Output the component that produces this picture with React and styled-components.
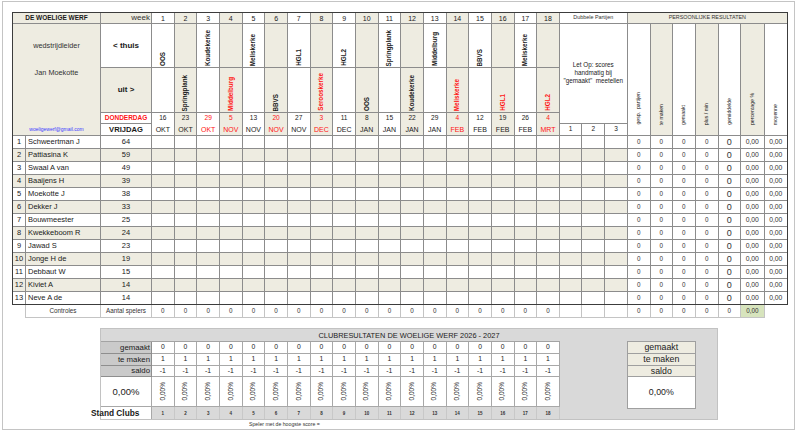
import React from 'react'
import styled, { createGlobalStyle } from 'styled-components'

const BEIGE = '#eeece1'
const WHITE = '#ffffff'
const RED = '#ff1414'
const INK = '#1a1a1a'

const weeks = [
  { home: 'OOS', day: '16', month: 'OKT' },
  { away: 'Springplank', day: '23', month: 'OKT' },
  { home: 'Koudekerke', day: '29', month: 'OKT', red: true },
  { away: 'Middelburg', awayRed: true, day: '5', month: 'NOV', red: true },
  { home: 'Meliskerke', day: '13', month: 'NOV' },
  { away: 'BBVS', day: '20', month: 'NOV', red: true },
  { home: 'HGL1', day: '27', month: 'NOV' },
  { away: 'Serooskerke', awayRed: true, day: '3', month: 'DEC', red: true },
  { home: 'HGL2', day: '11', month: 'DEC' },
  { away: 'OOS', day: '8', month: 'JAN' },
  { home: 'Springplank', day: '15', month: 'JAN' },
  { away: 'Koudekerke', day: '22', month: 'JAN' },
  { home: 'Middelburg', day: '29', month: 'JAN' },
  { away: 'Meliskerke', awayRed: true, day: '4', month: 'FEB', red: true },
  { home: 'BBVS', day: '12', month: 'FEB' },
  { away: 'HGL1', awayRed: true, day: '19', month: 'FEB' },
  { home: 'Meliskerke', day: '26', month: 'FEB' },
  { away: 'HGL2', awayRed: true, day: '4', month: 'MRT', red: true },
]

const players = [
  ['Schweertman J', 64],
  ['Pattiasina K', 59],
  ['Swaal A van', 49],
  ['Baaijens H', 39],
  ['Moekotte J', 38],
  ['Dekker J', 33],
  ['Bouwmeester', 25],
  ['Kwekkeboom R', 24],
  ['Jawad S', 23],
  ['Jonge H de', 19],
  ['Debbaut W', 15],
  ['Kiviet A', 14],
  ['Neve A de', 14],
]

const resultLabels = ['gesp.  partijen', 'te maken', 'gemaakt', 'plus / min', 'gemiddelde', 'percentage %', 'moyenne']

const shade = (i) => (i % 2 ? BEIGE : WHITE)

const GlobalStyle = createGlobalStyle`
  * { box-sizing: border-box; }
  body {
    margin: 0;
    background: #fff;
    color: ${INK};
    font-family: "Liberation Sans", Arial, sans-serif;
  }
`

const Frame = styled.div`
  margin: 1px 0 0 2px;
  width: 793px;
  height: 429px;
  border: 1px solid #c4c4c4;
  padding: 10px 0 0 9px;
`

const COLS = '12px 74px 50px repeat(21, 21.667px) 22px 21px 22px 22px 21px 23px 22px'

const Sheet = styled.div`
  display: grid;
  grid-template-columns: ${COLS};
  grid-template-rows: 10px 43px 44px 10px 11px repeat(13, 12px);
  gap: 1px;
  width: max-content;
  background: #8c8c8c;
  border: 1px solid #3c3c3c;
`

const Cell = styled.div`
  grid-column: span ${(p) => p.$cs || 1};
  grid-row: span ${(p) => p.$rs || 1};
  background: ${(p) => p.$bg || WHITE};
  color: ${(p) => p.$color || INK};
  font-size: ${(p) => p.$size || 7}px;
  display: flex;
  align-items: center;
  justify-content: center;
  line-height: 1;
  white-space: nowrap;
  overflow: hidden;
`

const ClubName = styled(Cell)`
  background: ${BEIGE};
  font-weight: 700;
  font-size: 6.5px;
`

const WeekLabel = styled(Cell)`
  background: ${BEIGE};
  justify-content: flex-end;
  padding-right: 1px;
  font-size: 8px;
  color: #333;
`

const SmallHead = styled(Cell)`
  font-size: 5.4px;
  color: #333;
`

const Leader = styled(Cell)`
  background: ${BEIGE};
  flex-direction: column;
  justify-content: flex-start;
  padding: 18px 0 3px;
  gap: 20px;
  font-size: 7.3px;
  color: #333;
`

const Mail = styled.span`
  margin-top: auto;
  font-size: 5px;
  color: #3b3bff;
`

const Side = styled(Cell)`
  font-weight: 700;
  font-size: 8px;
`

const DayName = styled(Cell)`
  font-weight: 700;
`

const TeamCell = styled(Cell)`
  align-items: flex-end;
  padding-bottom: 1px;
  font-weight: 700;
  font-size: 6.3px;
`

const Upright = styled.span`
  writing-mode: vertical-rl;
  transform: rotate(180deg);
  white-space: pre;
  line-height: 1;
`

const DateCell = styled(Cell)`
  flex-direction: column;
  justify-content: space-between;
  padding: 2px 0 2px;
  font-size: 6.6px;
`

const Month = styled.span`
  font-size: 7px;
`

const Note = styled(Cell)`
  flex-direction: column;
  gap: 1.8px;
  font-size: 6.3px;
  color: #222;
`

const ResultHead = styled(Cell)`
  align-items: flex-end;
  padding-bottom: 10px;
  font-size: 5.2px;
  color: #222;
`

const RowNo = styled(Cell)`
  font-size: 7.5px;
`

const PlayerName = styled(Cell)`
  justify-content: flex-start;
  padding-left: 2px;
  font-size: 7.5px;
`

const Score = styled(Cell)`
  font-size: 7.5px;
`

const Result = styled(Cell)`
  font-size: ${(p) => p.$size || 6.3}px;
  color: #333;
`

const Checks = styled.div`
  display: grid;
  grid-template-columns: 74px 50px repeat(21, 21.667px) 22px 21px 22px 22px 21px 23px;
  grid-template-rows: 12px;
  gap: 1px;
  width: max-content;
  margin-left: 13px;
  background: #c4c4c4;
  border: 1px solid #c4c4c4;
  border-top: none;
`

const CheckCell = styled(Cell)`
  font-size: 6.3px;
  color: #333;
`

const ClubBox = styled.div`
  margin: 10px 0 0 88px;
  width: 618px;
  height: 92px;
  background: #d9d9d9;
  border: 1px solid #c2c2c2;
  display: flex;
  flex-direction: column;
`

const ClubTitle = styled.div`
  height: 12px;
  display: flex;
  align-items: center;
  justify-content: center;
  font-size: 7.4px;
  color: #222;
`

const ClubBody = styled.div`
  display: flex;
  align-items: flex-start;
  flex: 1;
`

const ClubGrid = styled.div`
  display: grid;
  grid-template-columns: 51px repeat(18, 22.667px);
  grid-template-rows: 12px 12px 11px 30px 12px;
  border-top: 1px solid #a3a3a3;
`

const ClubLabel = styled.div`
  display: flex;
  align-items: center;
  justify-content: flex-end;
  padding-right: 1px;
  background: #cacaca;
  border-right: 1px solid #8e8e8e;
  border-bottom: 1px solid #8e8e8e;
  font-size: 7.8px;
  line-height: 1;
`

const ClubValue = styled.div`
  display: flex;
  align-items: center;
  justify-content: center;
  background: #fff;
  border-right: 1px solid #a8a8a8;
  border-bottom: 1px solid #a8a8a8;
  font-size: ${(p) => p.$size || 6.8}px;
  line-height: 1;
  color: #222;
`

const StandLabel = styled.div`
  display: flex;
  align-items: center;
  background: #fff;
  border-right: 1px solid #a8a8a8;
  font-size: 8.3px;
  font-weight: 700;
  line-height: 1;
  white-space: nowrap;
  overflow: visible;

  span {
    margin-left: -10px;
  }
`

const StandNo = styled.div`
  display: flex;
  align-items: center;
  justify-content: center;
  border-right: 1px solid #c8c8c8;
  font-size: 4.5px;
  font-weight: 700;
  color: #333;
`

const Spacer = styled.div`
  width: 67px;
`

const Totals = styled.div`
  width: 69px;
  display: flex;
  flex-direction: column;
  border: 1px solid #9f9f9f;
  border-bottom: none;
`

const TotalCell = styled.div`
  height: ${(p) => p.$h}px;
  display: flex;
  align-items: center;
  justify-content: center;
  background: ${(p) => p.$bg || WHITE};
  border-bottom: 1px solid #9f9f9f;
  font-size: 8.8px;
  line-height: 1;
  color: #222;
`

const Footnote = styled.div`
  margin-left: 237px;
  height: 9px;
  line-height: 9px;
  font-size: 5.2px;
  color: #333;
`

export default function App() {
  return (
    <>
      <GlobalStyle />
      <Frame>
        <Sheet>
          <ClubName $cs={2}>DE WOELIGE WERF</ClubName>
          <WeekLabel>week</WeekLabel>
          {weeks.map((w, i) => (
            <Cell key={'n' + i} $bg={shade(i)}>{i + 1}</Cell>
          ))}
          <SmallHead $cs={3}>Dubbele Partijen</SmallHead>
          <SmallHead $cs={7} $bg={BEIGE}>PERSOONLIJKE RESULTATEN</SmallHead>

          <Leader $cs={2} $rs={4}>
            <span>wedstrijdleider</span>
            <span>Jan Moekotte</span>
            <Mail>woeligewerf@gmail.com</Mail>
          </Leader>
          <Side>&lt; thuis</Side>
          {weeks.map((w, i) => (
            <TeamCell key={'h' + i} $bg={shade(i)}>
              {w.home && <Upright>{w.home}</Upright>}
            </TeamCell>
          ))}
          <Note $cs={3} $rs={3}>
            <span>Let Op: scores</span>
            <span>handmatig bij</span>
            <span>"gemaakt"&nbsp; meetellen</span>
          </Note>
          {resultLabels.map((l, i) => (
            <ResultHead key={l} $rs={4} $bg={shade(i)}>
              <Upright>{l}</Upright>
            </ResultHead>
          ))}

          <Side $bg={BEIGE}>uit &gt;</Side>
          {weeks.map((w, i) => (
            <TeamCell key={'a' + i} $bg={shade(i)} $color={w.awayRed ? RED : INK}>
              {w.away && <Upright>{w.away}</Upright>}
            </TeamCell>
          ))}

          <DayName $color={RED} $size={6.5}>DONDERDAG</DayName>
          {weeks.map((w, i) => (
            <DateCell key={'d' + i} $rs={2} $bg={shade(i)} $color={w.red ? RED : '#222'}>
              <span>{w.day}</span>
              <Month>{w.month}</Month>
            </DateCell>
          ))}
          <DayName $size={7.6}>VRIJDAG</DayName>
          {[1, 2, 3].map((n) => (
            <Cell key={'p' + n} $size={6.5}>{n}</Cell>
          ))}

          {players.map(([name, score], r) => (
            <React.Fragment key={name}>
              <RowNo $bg={shade(r)}>{r + 1}</RowNo>
              <PlayerName $bg={shade(r)}>{name}</PlayerName>
              <Score $bg={shade(r)}>{score}</Score>
              {Array.from({ length: 21 }, (_, c) => (
                <Cell key={c} $bg={shade(r)} />
              ))}
              <Result>0</Result>
              <Result>0</Result>
              <Result>0</Result>
              <Result>0</Result>
              <Result $size={9}>0</Result>
              <Result $size={6.8}>0,00</Result>
              <Result $size={6.8}>0,00</Result>
            </React.Fragment>
          ))}
        </Sheet>

        <Checks>
          <CheckCell>Controles</CheckCell>
          <CheckCell>Aantal spelers</CheckCell>
          {weeks.map((w, i) => (
            <CheckCell key={'c' + i}>0</CheckCell>
          ))}
          <CheckCell />
          <CheckCell />
          <CheckCell />
          <CheckCell>0</CheckCell>
          <CheckCell>0</CheckCell>
          <CheckCell>0</CheckCell>
          <CheckCell>0</CheckCell>
          <CheckCell>0</CheckCell>
          <CheckCell $bg="#d7e4bd" $size={6.8}>0,00</CheckCell>
        </Checks>

        <ClubBox>
          <ClubTitle>CLUBRESULTATEN DE WOELIGE WERF 2026 - 2027</ClubTitle>
          <ClubBody>
            <ClubGrid>
              <ClubLabel>gemaakt</ClubLabel>
              {weeks.map((w, i) => <ClubValue key={'g' + i}>0</ClubValue>)}
              <ClubLabel>te maken</ClubLabel>
              {weeks.map((w, i) => <ClubValue key={'t' + i}>1</ClubValue>)}
              <ClubLabel>saldo</ClubLabel>
              {weeks.map((w, i) => <ClubValue key={'s' + i}>-1</ClubValue>)}
              <ClubValue $size={9.5}>0,00%</ClubValue>
              {weeks.map((w, i) => (
                <ClubValue key={'q' + i} $size={6.5}>
                  <Upright>0,00%</Upright>
                </ClubValue>
              ))}
              <StandLabel><span>Stand Clubs</span></StandLabel>
              {weeks.map((w, i) => <StandNo key={'r' + i}>{i + 1}</StandNo>)}
            </ClubGrid>
            <Spacer />
            <Totals>
              <TotalCell $h={12} $bg={BEIGE}>gemaakt</TotalCell>
              <TotalCell $h={12} $bg={BEIGE}>te maken</TotalCell>
              <TotalCell $h={11} $bg={BEIGE}>saldo</TotalCell>
              <TotalCell $h={32}>0,00%</TotalCell>
            </Totals>
          </ClubBody>
        </ClubBox>

        <Footnote>Speler met de hoogste score =</Footnote>
      </Frame>
    </>
  )
}
